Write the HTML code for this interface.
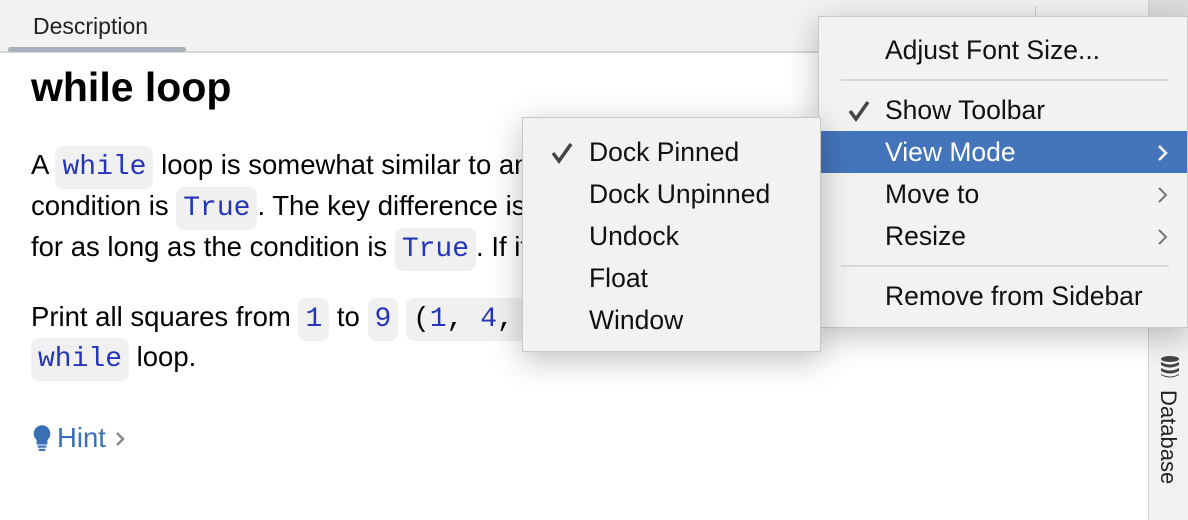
<!DOCTYPE html>
<html><head><style>
*{margin:0;padding:0;box-sizing:border-box}
body{width:1188px;height:520px;overflow:hidden;background:#fff;font-family:"Liberation Sans",sans-serif;position:relative;color:#000}
.tabbar{position:absolute;left:0;top:0;width:1148px;height:53px;background:#f2f2f2;border-bottom:2px solid #d6d6d6}
.tab{position:absolute;left:33px;top:13px;font-size:23px;color:#222}
.tabline{position:absolute;left:8px;top:47px;width:178px;height:5px;background:#a9b0bd;border-radius:3px}
.side{position:absolute;left:1148px;top:0;width:40px;height:520px;background:#f2f2f2;border-left:1px solid #d0d0d0}
.p{position:absolute;left:31px;font-size:27.5px;white-space:nowrap;line-height:40px}
.c{font-family:"Liberation Mono",monospace;color:#2435b8;background:#f0f0f0;border-radius:8px;padding:6px 7px;font-size:28px}
h1{position:absolute;left:31px;top:64px;font-size:41px;font-weight:bold}
.menu{position:absolute;background:#f2f2f2;box-shadow:0 8px 30px rgba(0,0,0,.25);font-size:26.5px;color:#111}
.it{position:absolute;left:0;right:0;height:42px;line-height:42px}
.sep{position:absolute;left:22px;right:18px;height:2px;background:#d8d8d8}
.chev{position:absolute;right:18px;top:13px}
.chk{position:absolute;top:11px}
</style></head><body>
<div class="tabbar"><div class="tab">Description</div><div class="tabline"></div>
<div style="position:absolute;left:1035px;top:6px;width:1px;height:40px;background:#ccc"></div></div>
<div class="side"><div style="position:absolute;left:0;top:0;width:40px;height:16px;background:#ddd"></div>
<svg style="position:absolute;left:10px;top:355px" width="22" height="24" viewBox="0 0 22 24"><g fill="#444"><ellipse cx="11" cy="4" rx="9" ry="3"/><path d="M2 7q9 5 18 0v3q-9 5-18 0z"/><path d="M2 13q9 5 18 0v3q-9 5-18 0z"/><path d="M2 19q9 5 18 0v1q-9 5-18 0z"/></g></svg>
<div style="position:absolute;left:6px;top:390px;writing-mode:vertical-rl;font-size:22px;color:#222">Database</div></div>
<h1>while loop</h1>
<div class="p" style="top:145px">A <span class="c">while</span> loop is somewhat similar to an <span class="c">if</span> statement: it executes some code if the</div>
<div class="p" style="top:186px">condition is <span class="c">True</span>. The key difference is that it will continue to execute</div>
<div class="p" style="top:227px">for as long as the condition is <span class="c">True</span>. If it is not, the program exits.</div>
<div class="p" style="top:297px">Print all squares from <span class="c">1</span> to <span class="c">9</span> <span class="c" style="color:#000">(<span style="color:#2435b8">1</span>, <span style="color:#2435b8">4</span>, <span style="color:#2435b8">9</span>, ..., <span style="color:#2435b8">81</span>)</span> using a</div>
<div class="p" style="top:337px"><span class="c">while</span> loop.</div>
<div class="p" style="top:418px;color:#3a6fb5"><svg width="22" height="28" viewBox="0 0 18 26" style="vertical-align:-5px;margin-right:4px"><path d="M9 1a8 8 0 0 0-5 14v4h10v-4a8 8 0 0 0-5-14z" fill="#3a6fb5"/><rect x="5" y="20" width="8" height="2" fill="#3a6fb5"/><rect x="6" y="23" width="6" height="2" fill="#3a6fb5"/></svg>Hint <svg width="12" height="16" viewBox="0 0 12 16"><path d="M3 2l6 6-6 6" stroke="#888" stroke-width="2.5" fill="none"/></svg></div>

<div class="menu" style="left:818px;top:16px;width:370px;height:312px;border:1px solid #c8c8c8">
<div class="it" style="top:12px;padding-left:66px">Adjust Font Size...</div>
<div class="sep" style="top:62px"></div>
<div class="it" style="top:72px;padding-left:66px"><svg class="chk" style="left:28px" width="24" height="22" viewBox="0 0 24 22"><path d="M3 11l6 8L21 2" stroke="#444" stroke-width="3.5" fill="none"/></svg>Show Toolbar</div>
<div class="it" style="top:114px;padding-left:66px;background:#4474ba;color:#fff">View Mode<svg class="chev" width="12" height="18" viewBox="0 0 12 18"><path d="M2 2l7 7-7 7" stroke="#fff" stroke-width="2.5" fill="none"/></svg></div>
<div class="it" style="top:156px;padding-left:66px">Move to<svg class="chev" width="12" height="18" viewBox="0 0 12 18"><path d="M2 2l7 7-7 7" stroke="#777" stroke-width="2" fill="none"/></svg></div>
<div class="it" style="top:198px;padding-left:66px">Resize<svg class="chev" width="12" height="18" viewBox="0 0 12 18"><path d="M2 2l7 7-7 7" stroke="#777" stroke-width="2" fill="none"/></svg></div>
<div class="sep" style="top:248px"></div>
<div class="it" style="top:258px;padding-left:66px">Remove from Sidebar</div>
</div>
<div class="menu" style="left:522px;top:117px;width:299px;height:235px;border:1px solid #c8c8c8">
<div class="it" style="top:13px;padding-left:66px"><svg class="chk" style="left:27px" width="24" height="22" viewBox="0 0 24 22"><path d="M3 11l6 8L21 2" stroke="#444" stroke-width="3.5" fill="none"/></svg>Dock Pinned</div>
<div class="it" style="top:55px;padding-left:66px">Dock Unpinned</div>
<div class="it" style="top:97px;padding-left:66px">Undock</div>
<div class="it" style="top:139px;padding-left:66px">Float</div>
<div class="it" style="top:181px;padding-left:66px">Window</div>
</div>
</body></html>
